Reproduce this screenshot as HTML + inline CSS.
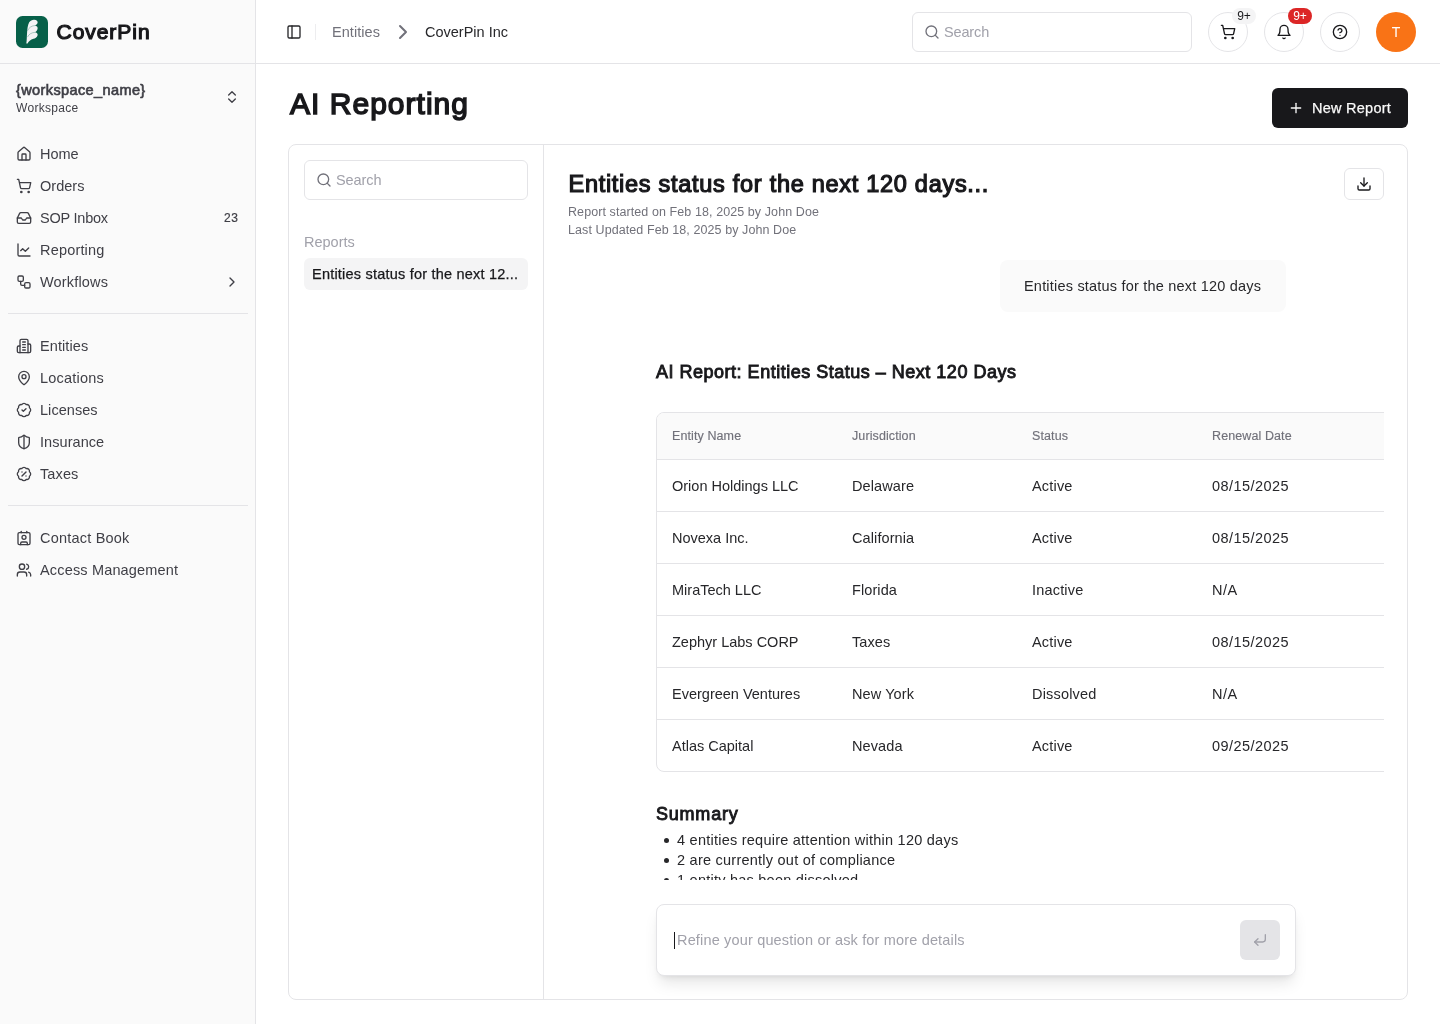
<!DOCTYPE html>
<html lang="en">
<head>
<meta charset="utf-8">
<title>AI Reporting</title>
<style>
*{box-sizing:border-box;margin:0;padding:0}
html,body{width:1440px;height:1024px;overflow:hidden;background:#fff}
body{font-family:"Liberation Sans",sans-serif;color:#18181b;position:relative;-webkit-font-smoothing:antialiased}
#root{position:absolute;left:0;top:0;width:1440px;height:1024px;will-change:transform}
.abs{position:absolute}
.t{position:absolute;white-space:nowrap;line-height:1}
svg.ic{position:absolute;fill:none;stroke:currentColor;stroke-width:2;stroke-linecap:round;stroke-linejoin:round}
/* sidebar */
#sb{position:absolute;left:0;top:0;width:256px;height:1024px;background:#fafafa;border-right:1px solid #e4e4e7}
#sbh{position:absolute;left:0;top:0;width:255px;height:64px;border-bottom:1px solid #e4e4e7}
.nav{color:#3f3f46;font-size:14.5px}
.sep{position:absolute;left:8px;width:240px;height:1px;background:#e4e4e7}
/* header */
#hd{position:absolute;left:256px;top:0;width:1184px;height:64px;border-bottom:1px solid #e4e4e7;background:#fff}
.circ{position:absolute;width:40px;height:40px;border-radius:50%;border:1px solid #e4e4e7;background:#fff;top:12px}
.h14{font-size:14.5px}
.badge{position:absolute;top:8px;width:24px;height:16px;border-radius:8px;font-size:12px;line-height:16px;text-align:center;white-space:nowrap}
#card{position:absolute;left:288px;top:144px;width:1120px;height:856px;border:1px solid #e4e4e7;border-radius:8px;background:#fff;overflow:hidden}
.sub{font-size:12.500px;color:#71717a;letter-spacing:0.085px}
#tblwrap{position:absolute;left:367px;top:267px;width:728px;height:360px;overflow:hidden}
#tbl{width:900px;height:360px;border:1px solid #e4e4e7;border-radius:8px;overflow:hidden}
.thr{display:flex;height:47px;background:#fafafa;border-bottom:1px solid #e4e4e7}
.th{flex:none;width:180px;padding-left:15px;font-size:12.500px;letter-spacing:0.100px;-webkit-text-stroke:0.150px #71717a;color:#71717a;line-height:47px;white-space:nowrap}
.tr{display:flex;height:52px;border-bottom:1px solid #e4e4e7}
.tr:last-child{border-bottom:0}
.td{flex:none;width:180px;padding-left:15px;font-size:14.500px;color:#27272a;line-height:53px;white-space:nowrap}
#ulclip{position:absolute;left:367px;top:684px;width:640px;height:51px;overflow:hidden}
#ulclip ul{list-style:none;padding-top:1px}
#ulclip li{position:relative;padding-left:21px;font-size:14.500px;letter-spacing:0.240px;line-height:20px;color:#27272a;white-space:nowrap}
#ulclip li:before{content:"";position:absolute;left:8px;top:8px;width:5px;height:5px;border-radius:50%;background:#27272a}
#inp{position:absolute;left:367px;top:759px;width:640px;height:72px;border:1px solid #e4e4e7;border-radius:8px;background:#fff;box-shadow:0 10px 15px -3px rgba(0,0,0,.1),0 4px 6px -4px rgba(0,0,0,.1)}
.td:nth-child(3){letter-spacing:0.180px}
.td:nth-child(4){letter-spacing:0.450px}
.td:nth-child(2){letter-spacing:0.100px}
</style>
</head>
<body>
<div id="root">
<!-- SIDEBAR -->
<div id="sb">
  <div id="sbh">
    <div class="abs" style="left:16px;top:16px;width:32px;height:32px;border-radius:6.500px;background:#076049"></div>
    <svg class="abs" style="left:16px;top:16px" width="32" height="32" viewBox="0 0 32 32"><path d="M10.300 27.500C10.900 24.500 10.700 21 11 18C11.200 13 11.800 9 13.200 6.200C14.500 4.500 16.500 3.600 18.300 3.800C20.500 4 22 5.200 21.600 6.800C21.300 8.200 20 9 19 9.500C20.500 9.800 22 11 21.600 12.800C21.200 14.800 20 15.800 19 16.300C20.500 16.600 22 17.600 21.600 19.200C21 21.500 19 22.300 17.500 22.800C14.500 23.500 12.500 25.500 11.600 27.600Z" fill="#f4f4f5"/><path d="M19 9.500C15.500 9.800 13 11.500 11.600 14.500M19 16.300C15.500 16.600 13 18 11.600 20.800" fill="none" stroke="#5f9a8a" stroke-width="0.500" stroke-linecap="round"/></svg>
    <div class="t" id="logo" style="left:56.500px;top:21px;font-size:21px;font-weight:400;-webkit-text-stroke:1.200px #18181b;letter-spacing:0.960px;color:#18181b">CoverPin</div>
  </div>
  <div class="t" id="wsn" style="left:16px;top:83px;font-size:14.500px;font-weight:400;-webkit-text-stroke:0.650px #3f3f46;letter-spacing:0.390px;color:#3f3f46">{workspace_name}</div>
  <div class="t" id="wss" style="left:16px;top:102px;font-size:12px;letter-spacing:0.300px;color:#3f3f46">Workspace</div>
  <svg class="ic" style="left:224px;top:89px;color:#3f3f46" width="16" height="16" viewBox="0 0 24 24"><path d="m7 15 5 5 5-5"/><path d="m7 9 5-5 5 5"/></svg>
  <svg class="ic nav" style="left:16px;top:146px" width="16" height="16" viewBox="0 0 24 24"><path d="M15 21v-8a1 1 0 0 0-1-1h-4a1 1 0 0 0-1 1v8"/><path d="M3 10a2 2 0 0 1 .709-1.528l7-5.999a2 2 0 0 1 2.582 0l7 5.999A2 2 0 0 1 21 10v9a2 2 0 0 1-2 2H5a2 2 0 0 1-2-2z"/></svg>
  <div class="t nav nt" style="left:40px;top:147px;letter-spacing:-0.025px">Home</div>
  <svg class="ic nav" style="left:16px;top:178px" width="16" height="16" viewBox="0 0 24 24"><circle cx="8" cy="21" r="1"/><circle cx="19" cy="21" r="1"/><path d="M2.05 2.05h2l2.660 12.420a2 2 0 0 0 2 1.580h9.780a2 2 0 0 0 1.950-1.570l1.650-7.430H5.120"/></svg>
  <div class="t nav nt" style="left:40px;top:179px;letter-spacing:0.017px">Orders</div>
  <svg class="ic nav" style="left:16px;top:210px" width="16" height="16" viewBox="0 0 24 24"><polyline points="22 12 16 12 14 15 10 15 8 12 2 12"/><path d="M5.450 5.110 2 12v6a2 2 0 0 0 2 2h16a2 2 0 0 0 2-2v-6l-3.450-6.890A2 2 0 0 0 16.760 4H7.240a2 2 0 0 0-1.790 1.110z"/></svg>
  <div class="t nav nt" style="left:40px;top:211px;letter-spacing:-0.222px">SOP Inbox</div>
  <svg class="ic nav" style="left:16px;top:242px" width="16" height="16" viewBox="0 0 24 24"><path d="M3 3v16a2 2 0 0 0 2 2h16"/><path d="m19 9-5 5-4-4-3 3"/></svg>
  <div class="t nav nt" style="left:40px;top:243px;letter-spacing:0.178px">Reporting</div>
  <svg class="ic nav" style="left:16px;top:274px" width="16" height="16" viewBox="0 0 24 24"><rect width="8" height="8" x="3" y="3" rx="2"/><path d="M7 11v4a2 2 0 0 0 2 2h4"/><rect width="8" height="8" x="13" y="13" rx="2"/></svg>
  <div class="t nav nt" style="left:40px;top:275px;letter-spacing:0.167px">Workflows</div>
  <svg class="ic nav" style="left:16px;top:338px" width="16" height="16" viewBox="0 0 24 24"><path d="M6 22V4a2 2 0 0 1 2-2h8a2 2 0 0 1 2 2v18Z"/><path d="M6 12H4a2 2 0 0 0-2 2v6a2 2 0 0 0 2 2h2"/><path d="M18 9h2a2 2 0 0 1 2 2v9a2 2 0 0 1-2 2h-2"/><path d="M10 6h4"/><path d="M10 10h4"/><path d="M10 14h4"/><path d="M10 18h4"/></svg>
  <div class="t nav nt" style="left:40px;top:339px;letter-spacing:0.088px">Entities</div>
  <svg class="ic nav" style="left:16px;top:370px" width="16" height="16" viewBox="0 0 24 24"><path d="M20 10c0 4.993-5.539 10.193-7.399 11.799a1 1 0 0 1-1.202 0C9.539 20.193 4 14.993 4 10a8 8 0 0 1 16 0"/><circle cx="12" cy="10" r="3"/></svg>
  <div class="t nav nt" style="left:40px;top:371px;letter-spacing:0.200px">Locations</div>
  <svg class="ic nav" style="left:16px;top:402px" width="16" height="16" viewBox="0 0 24 24"><path d="M3.850 8.620a4 4 0 0 1 4.780-4.770 4 4 0 0 1 6.740 0 4 4 0 0 1 4.780 4.780 4 4 0 0 1 0 6.740 4 4 0 0 1-4.770 4.780 4 4 0 0 1-6.750 0 4 4 0 0 1-4.780-4.770 4 4 0 0 1 0-6.760Z"/><path d="m9 12 2 2 4-4"/></svg>
  <div class="t nav nt" style="left:40px;top:403px;letter-spacing:0.050px">Licenses</div>
  <svg class="ic nav" style="left:16px;top:434px" width="16" height="16" viewBox="0 0 24 24"><path d="M20 13c0 5-3.500 7.500-7.660 8.950a1 1 0 0 1-.670-.010C7.500 20.500 4 18 4 13V6a1 1 0 0 1 1-1c2 0 4.500-1.200 6.240-2.720a1.170 1.170 0 0 1 1.520 0C14.510 3.810 17 5 19 5a1 1 0 0 1 1 1z"/><path d="M12 22V2"/></svg>
  <div class="t nav nt" style="left:40px;top:435px;letter-spacing:0.056px">Insurance</div>
  <svg class="ic nav" style="left:16px;top:466px" width="16" height="16" viewBox="0 0 24 24"><path d="M3.850 8.620a4 4 0 0 1 4.780-4.770 4 4 0 0 1 6.740 0 4 4 0 0 1 4.780 4.780 4 4 0 0 1 0 6.740 4 4 0 0 1-4.770 4.780 4 4 0 0 1-6.750 0 4 4 0 0 1-4.780-4.770 4 4 0 0 1 0-6.760Z"/><path d="m15 9-6 6"/><path d="M9 9h.01"/><path d="M15 15h.01"/></svg>
  <div class="t nav nt" style="left:40px;top:467px;letter-spacing:0.120px">Taxes</div>
  <svg class="ic nav" style="left:16px;top:530px" width="16" height="16" viewBox="0 0 24 24"><path d="M16 2v2"/><path d="M7 22v-2a2 2 0 0 1 2-2h6a2 2 0 0 1 2 2v2"/><path d="M8 2v2"/><circle cx="12" cy="11" r="3"/><rect x="3" y="4" width="18" height="18" rx="2"/></svg>
  <div class="t nav nt" style="left:40px;top:531px;letter-spacing:0.208px">Contact Book</div>
  <svg class="ic nav" style="left:16px;top:562px" width="16" height="16" viewBox="0 0 24 24"><path d="M16 21v-2a4 4 0 0 0-4-4H6a4 4 0 0 0-4 4v2"/><circle cx="9" cy="7" r="4"/><path d="M22 21v-2a4 4 0 0 0-3-3.870"/><path d="M16 3.130a4 4 0 0 1 0 7.750"/></svg>
  <div class="t nav nt" style="left:40px;top:563px;letter-spacing:0.165px">Access Management</div>
  <div class="t" id="n23" style="left:224px;top:212px;font-size:12px;color:#3f3f46;letter-spacing:0.600px;-webkit-text-stroke:0.200px #3f3f46">23</div>
  <svg class="ic nav" style="left:224px;top:274px" width="16" height="16" viewBox="0 0 24 24"><path d="m9 18 6-6-6-6"/></svg>
  <div class="sep" style="top:313px"></div>
  <div class="sep" style="top:505px"></div>
</div>

<!-- HEADER -->
<div id="hd">
  <svg class="ic" style="left:30px;top:24px;color:#27272a" width="16" height="16" viewBox="0 0 24 24"><rect width="18" height="18" x="3" y="3" rx="2"/><path d="M9 3v18"/></svg>
  <div class="abs" style="left:59px;top:24px;width:1px;height:16px;background:#ededef"></div>
  <div class="t h14" id="bc1" style="left:76px;top:25px;letter-spacing:0.060px;color:#71717a">Entities</div>
  <svg class="ic" style="left:135px;top:20px;color:#71717a" width="24" height="24" viewBox="0 0 24 24"><path d="m9 18 6-6-6-6"/></svg>
  <div class="t h14" id="bc2" style="left:169px;top:25px;color:#27272a">CoverPin Inc</div>
  <div class="abs" style="left:656px;top:12px;width:280px;height:40px;border:1px solid #e4e4e7;border-radius:6px;background:#fff"></div>
  <svg class="ic" style="left:668px;top:24px;color:#71717a" width="16" height="16" viewBox="0 0 24 24"><circle cx="11" cy="11" r="8"/><path d="m21 21-4.300-4.300"/></svg>
  <div class="t h14" id="hsearch" style="left:688px;top:25px;letter-spacing:-0.150px;color:#a1a1aa">Search</div>
  <div class="circ" style="left:952px"></div>
  <svg class="ic" style="left:964px;top:24px;color:#18181b" width="16" height="16" viewBox="0 0 24 24"><circle cx="8" cy="21" r="1"/><circle cx="19" cy="21" r="1"/><path d="M2.050 2.050h2l2.660 12.420a2 2 0 0 0 2 1.580h9.780a2 2 0 0 0 1.950-1.570l1.650-7.430H5.120"/></svg>
  <div class="badge" style="left:976px;background:#f4f4f5;color:#18181b">9+</div>
  <div class="circ" style="left:1008px"></div>
  <svg class="ic" style="left:1020px;top:24px;color:#18181b" width="16" height="16" viewBox="0 0 24 24"><path d="M6 8a6 6 0 0 1 12 0c0 7 3 9 3 9H3s3-2 3-9"/><path d="M10.300 21a1.940 1.940 0 0 0 3.400 0"/></svg>
  <div class="badge" style="left:1032px;background:#dc2626;color:#fff">9+</div>
  <div class="circ" style="left:1064px"></div>
  <svg class="ic" style="left:1076px;top:24px;color:#18181b" width="16" height="16" viewBox="0 0 24 24"><circle cx="12" cy="12" r="10"/><path d="M9.090 9a3 3 0 0 1 5.830 1c0 2-3 3-3 3"/><path d="M12 17h.01"/></svg>
  <div class="abs" style="left:1120px;top:12px;width:40px;height:40px;border-radius:50%;background:#f97316"></div>
  <div class="t" id="avt" style="left:1120px;top:25px;width:40px;text-align:center;font-size:14px;color:#fff">T</div>
</div>

<!-- PAGE TITLE -->
<div class="t" id="ttl" style="left:290px;top:89px;font-size:30px;font-weight:400;-webkit-text-stroke:1.500px #18181b;letter-spacing:1.020px;color:#18181b">AI Reporting</div>
<div class="abs" style="left:1272px;top:88px;width:136px;height:40px;border-radius:6px;background:#18181b"></div>
<svg class="ic" style="left:1288px;top:100px;color:#fafafa" width="16" height="16" viewBox="0 0 24 24"><path d="M5 12h14"/><path d="M12 5v14"/></svg>
<div class="t h14" id="newr" style="left:1312px;top:101px;letter-spacing:0.250px;-webkit-text-stroke:0.250px #fafafa;color:#fafafa">New Report</div>

<!-- MAIN CARD -->
<div id="card">
  <div class="abs" style="left:254px;top:0;width:1px;height:856px;background:#e4e4e7"></div>
  <div class="abs" style="left:15px;top:15px;width:224px;height:40px;border:1px solid #e4e4e7;border-radius:6px"></div>
  <svg class="ic" style="left:27px;top:27px;color:#71717a" width="16" height="16" viewBox="0 0 24 24"><circle cx="11" cy="11" r="8"/><path d="m21 21-4.300-4.300"/></svg>
  <div class="t h14 pt" id="psearch" style="left:47px;top:28px;letter-spacing:-0.100px;color:#a1a1aa">Search</div>
  <div class="t h14 pt" id="preports" style="left:15px;top:90px;color:#a1a1aa">Reports</div>
  <div class="abs" style="left:15px;top:113px;width:224px;height:32px;border-radius:6px;background:#f4f4f5"></div>
  <div class="t h14 pt" id="pitem" style="left:23px;top:122px;color:#18181b;letter-spacing:0.210px;-webkit-text-stroke:0.250px #18181b">Entities status for the next 12...</div>

  <div class="t pt" id="rtitle" style="left:279.500px;top:28px;font-size:23.500px;font-weight:400;-webkit-text-stroke:1.200px #18181b;letter-spacing:0.718px;color:#18181b">Entities status for the next 120 days...</div>
  <div class="t pt sub" id="sub1" style="left:279px;top:61px">Report started on Feb 18, 2025 by John Doe</div>
  <div class="t pt sub" id="sub2" style="left:279px;top:79px">Last Updated Feb 18, 2025 by John Doe</div>
  <div class="abs" style="left:1055px;top:23px;width:40px;height:32px;border:1px solid #e4e4e7;border-radius:6px"></div>
  <svg class="ic" style="left:1067px;top:31px;color:#18181b" width="16" height="16" viewBox="0 0 24 24"><path d="M21 15v4a2 2 0 0 1-2 2H5a2 2 0 0 1-2-2v-4"/><polyline points="7 10 12 15 17 10"/><line x1="12" x2="12" y1="15" y2="3"/></svg>

  <div class="abs" style="left:711px;top:115px;width:286px;height:52px;border-radius:8px;background:#fafafa"></div>
  <div class="t h14 pt" id="bubble" style="left:735px;top:134px;color:#27272a;letter-spacing:0.200px">Entities status for the next 120 days</div>

  <div class="t pt" id="h3a" style="left:367px;top:218px;font-size:18px;font-weight:400;-webkit-text-stroke:0.900px #18181b;letter-spacing:0.507px;color:#18181b">AI Report: Entities Status – Next 120 Days</div>
  <div id="tblwrap"><div id="tbl">
  <div class="thr"><div class="th">Entity Name</div><div class="th">Jurisdiction</div><div class="th">Status</div><div class="th">Renewal Date</div><div class="th"></div></div>
  <div class="tr"><div class="td">Orion Holdings LLC</div><div class="td">Delaware</div><div class="td">Active</div><div class="td">08/15/2025</div><div class="td"></div></div>
  <div class="tr"><div class="td">Novexa Inc.</div><div class="td">California</div><div class="td">Active</div><div class="td">08/15/2025</div><div class="td"></div></div>
  <div class="tr"><div class="td">MiraTech LLC</div><div class="td">Florida</div><div class="td">Inactive</div><div class="td">N/A</div><div class="td"></div></div>
  <div class="tr"><div class="td">Zephyr Labs CORP</div><div class="td">Taxes</div><div class="td">Active</div><div class="td">08/15/2025</div><div class="td"></div></div>
  <div class="tr"><div class="td">Evergreen Ventures</div><div class="td">New York</div><div class="td">Dissolved</div><div class="td">N/A</div><div class="td"></div></div>
  <div class="tr"><div class="td">Atlas Capital</div><div class="td">Nevada</div><div class="td">Active</div><div class="td">09/25/2025</div><div class="td"></div></div>
  </div></div>
  <div class="t pt" id="h3b" style="left:367px;top:660px;font-size:18px;font-weight:400;-webkit-text-stroke:0.900px #18181b;letter-spacing:0.786px;color:#18181b">Summary</div>
  <div id="ulclip"><ul>
    <li>4 entities require attention within 120 days</li>
    <li>2 are currently out of compliance</li>
    <li>1 entity has been dissolved</li>
  </ul></div>

  <div id="inp"></div>
  <div class="abs" style="left:385px;top:787px;width:1px;height:17px;background:#18181b"></div>
  <div class="t h14 pt" id="ph" style="left:388px;top:788px;color:#a1a1aa;letter-spacing:0.165px">Refine your question or ask for more details</div>
  <div class="abs" style="left:951px;top:775px;width:40px;height:40px;border-radius:6px;background:#e4e4e7"></div>
  <svg class="ic" style="left:963px;top:787px;color:#a1a1aa" width="16" height="16" viewBox="0 0 24 24"><polyline points="9 10 4 15 9 20"/><path d="M20 4v7a4 4 0 0 1-4 4H4"/></svg>
</div>
</div>
</body>
</html>
